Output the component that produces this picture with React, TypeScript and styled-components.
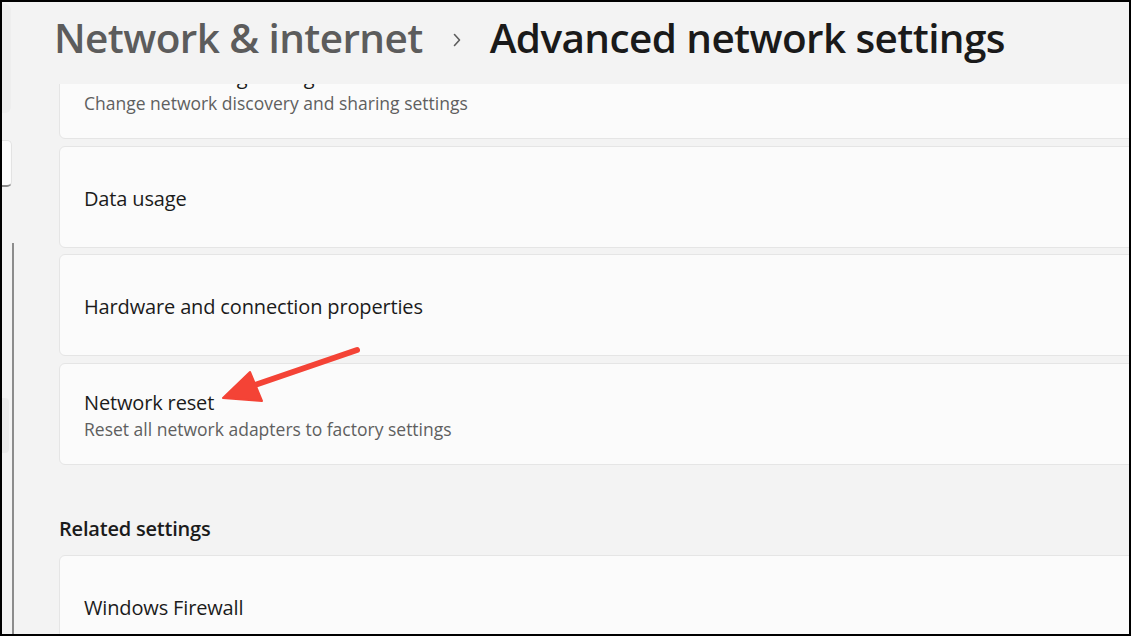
import React, { useLayoutEffect, useRef } from 'react';
import styled, { createGlobalStyle } from 'styled-components';

type Setting = { title: string; subtitle?: string };

const settings: Setting[] = [
  { title: 'Advanced sharing settings', subtitle: 'Change network discovery and sharing settings' },
  { title: 'Data usage' },
  { title: 'Hardware and connection properties' },
  { title: 'Network reset', subtitle: 'Reset all network adapters to factory settings' },
];

const related: Setting[] = [{ title: 'Windows Firewall' }];

const SCROLL_OFFSET = 47;

const SettingCard = ({ title, subtitle }: Setting) => (
  <Card>
    <CardTitle>{title}</CardTitle>
    {subtitle && <CardSubtitle>{subtitle}</CardSubtitle>}
  </Card>
);

const App = () => {
  const scrollRef = useRef<HTMLDivElement>(null);

  // the page is shown scrolled down a little, the first card sits under the header
  useLayoutEffect(() => {
    if (scrollRef.current) scrollRef.current.scrollTop = SCROLL_OFFSET;
  }, []);

  return (
    <>
      <GlobalStyle />
      <Frame>
        <NavPane>
          <ProfileBlock />
          <SearchBox />
          <NavItem $selected />
          <NavScrollThumb />
        </NavPane>
        <Main>
          <Header>
            <Crumb>Network &amp; internet</Crumb>
            <Chevron viewBox="0 0 8 14" aria-hidden>
              <path d="M1.5 1.5 L6.5 7 L1.5 12.5" />
            </Chevron>
            <PageTitle>Advanced network settings</PageTitle>
          </Header>
          <ScrollArea ref={scrollRef}>
            <List>
              {settings.map((s) => (
                <SettingCard key={s.title} {...s} />
              ))}
              <SectionHeading>Related settings</SectionHeading>
              {related.map((s) => (
                <SettingCard key={s.title} {...s} />
              ))}
            </List>
          </ScrollArea>
        </Main>
        <Annotation viewBox="0 0 1131 636" aria-hidden>
          <line x1="357" y1="350" x2="252" y2="386" />
          <polygon points="223,398 250,372 262,401" />
        </Annotation>
      </Frame>
    </>
  );
};

export default App;

const GlobalStyle = createGlobalStyle`
  html, body {
    margin: 0;
    padding: 0;
    height: 100%;
    overflow: hidden;
  }
  body {
    font-family: "Open Sans", "Noto Sans", sans-serif;
    background: #000;
  }
  #root {
    height: 100%;
  }
`;

const Frame = styled.div`
  position: relative;
  display: flex;
  width: 100vw;
  height: 100vh;
  box-sizing: border-box;
  border: 2px solid #000;
  background-color: #f3f3f3;
  overflow: hidden;
`;

const NavPane = styled.div`
  position: relative;
  width: 11px;
  flex-shrink: 0;
  display: flex;
  flex-direction: column;
`;

const ProfileBlock = styled.div`
  width: 9px;
  height: 109px;
  margin-top: 2px;
  background-color: #eeeeee;
  border-radius: 0 6px 6px 0;
`;

const SearchBox = styled.div`
  width: 10px;
  height: 47px;
  margin-top: 27px;
  box-sizing: border-box;
  background-color: #fbfbfb;
  border: 1px solid #e3e3e3;
  border-left: none;
  border-bottom: 2px solid #8a8a8a;
  border-radius: 0 5px 5px 0;
`;

const NavItem = styled.div<{ $selected?: boolean }>`
  width: 7px;
  height: 55px;
  margin-top: 211px;
  background-color: ${(p) => (p.$selected ? '#eaeaea' : 'transparent')};
  border-radius: 0 4px 4px 0;
`;

const NavScrollThumb = styled.div`
  position: absolute;
  top: 241px;
  bottom: 0;
  right: -1px;
  width: 2px;
  background-color: #8c8c8c;
`;

const Main = styled.div`
  flex: 1;
  min-width: 0;
  display: flex;
  flex-direction: column;
`;

const Header = styled.div`
  height: 82px;
  flex-shrink: 0;
  display: flex;
  align-items: center;
  padding-left: 41px;
  box-sizing: border-box;
  padding-bottom: 11px;
`;

const Crumb = styled.span`
  font-size: 40.5px;
  font-weight: 600;
  letter-spacing: -0.6px;
  color: #5c5c5c;
`;

const Chevron = styled.svg`
  width: 8px;
  height: 14px;
  margin: 4px 29px 0 30px;
  fill: none;
  stroke: #5c5c5c;
  stroke-width: 1.6;
  stroke-linecap: round;
  stroke-linejoin: round;
`;

const PageTitle = styled.span`
  font-size: 40.5px;
  font-weight: 600;
  letter-spacing: -0.6px;
  color: #1a1a1a;
`;

const ScrollArea = styled.div`
  flex: 1;
  overflow: hidden;
  padding-left: 46px;
`;

const List = styled.div`
  display: flex;
  flex-direction: column;
  gap: 6.5px;
  margin-right: -16px;
  padding-bottom: 80px;
`;

const Card = styled.div`
  height: 102px;
  flex-shrink: 0;
  box-sizing: border-box;
  display: flex;
  flex-direction: column;
  justify-content: center;
  padding: 4px 24px 0;
  background-color: #fbfbfb;
  border: 1px solid #e5e5e5;
  border-radius: 6px;
`;

const CardTitle = styled.div`
  font-size: 20px;
  line-height: 26px;
  letter-spacing: -0.15px;
  color: #1b1b1b;
`;

const CardSubtitle = styled.div`
  font-size: 17.5px;
  line-height: 26px;
  color: #5f5f5f;
`;

const SectionHeading = styled.div`
  margin: 44px 0 5px;
  font-size: 20px;
  line-height: 28px;
  font-weight: 600;
  letter-spacing: -0.2px;
  color: #1b1b1b;
`;

const Annotation = styled.svg`
  position: fixed;
  inset: 0;
  width: 1131px;
  height: 636px;
  pointer-events: none;

  line {
    stroke: #f44336;
    stroke-width: 6;
    stroke-linecap: round;
  }
  polygon {
    fill: #f44336;
    stroke: #f44336;
    stroke-width: 2;
    stroke-linejoin: round;
  }
`;
